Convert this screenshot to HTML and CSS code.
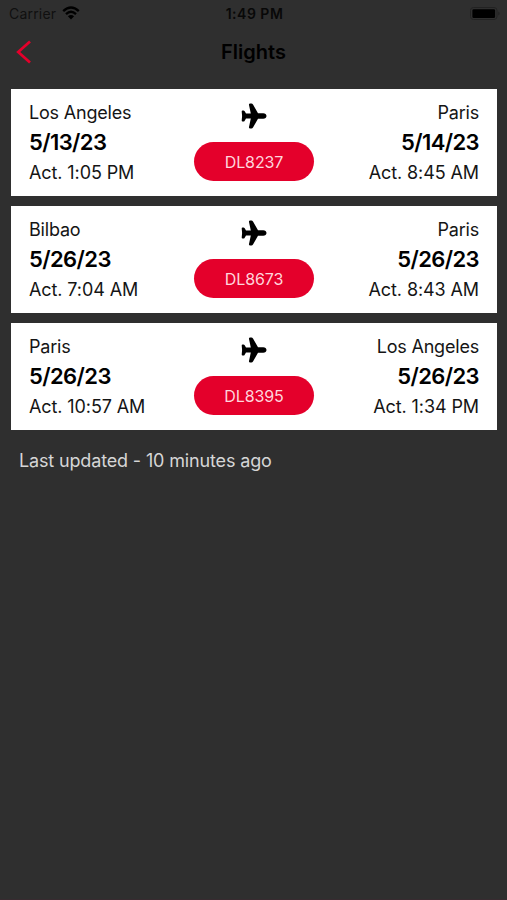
FILE: index.html
```html
<!DOCTYPE html>
<html lang="en">
<head>
<meta charset="UTF-8" />
<meta name="viewport" content="width=device-width, initial-scale=1.0">
<title>Flights</title>
<link rel="stylesheet" href="styles.css">
</head>
<body>

  <svg class="symbols" aria-hidden="true">
    <symbol id="plane" viewBox="0 0 26 26">
      <path d="M8 2Q7.7 .5 9.2 .5H10.4Q11.4 .5 12 1.5L17 10.2H22.2C24.2 10.2 25.5 11.4 25.5 13S24.2 15.8 22.2 15.8H17L12 24.5Q11.4 25.5 10.4 25.5H9.2Q7.7 25.5 8 24L9.8 15.4H5L3.7 17.7Q3.2 18.6 2.4 18.6H1.6Q.7 18.6 .7 17.5L1.1 13L.7 8.5Q.7 7.4 1.6 7.4H2.4Q3.2 7.4 3.7 8.3L5 10.6H9.8Z"/>
    </symbol>
  </svg>

  <div class="status-bar">
    <div class="status-left">
      <span class="carrier">Carrier</span>
      <svg class="wifi" viewBox="0 0 18 14">
        <path class="wave" d="M1.2 5.1Q9 -2 16.8 5.1"/>
        <path class="wave" d="M4 8.1Q9 3.6 14 8.1"/>
        <path d="M5.9 10.2Q9 7.6 12.1 10.2L9 13.4Z"/>
      </svg>
    </div>
    <span class="clock">1:49 PM</span>
    <svg class="battery" viewBox="0 0 30 13">
      <rect class="shell" x=".5" y=".5" width="26.5" height="12" rx="3"/>
      <rect x="2.4" y="2.2" width="22.7" height="8.8" rx="1.3"/>
      <path class="nub" d="M28.3 4.5Q29.6 5.2 29.6 6.5T28.3 8.5Z"/>
    </svg>
  </div>

  <header class="nav-bar">
    <a class="back" href="#" aria-label="Back">
      <svg viewBox="0 0 16 24"><path d="M14 1.5L2.2 12L14 22.5"/></svg>
    </a>
    <h1>Flights</h1>
  </header>

  <ul class="flights">
    <li>
      <div class="leg">
        <span class="city">Los Angeles</span>
        <span class="date">5/13/23</span>
        <span class="time">Act. 1:05 PM</span>
      </div>
      <div class="flight">
        <svg class="plane"><use href="#plane"/></svg>
        <button class="flight-number">DL8237</button>
      </div>
      <div class="leg arrival">
        <span class="city">Paris</span>
        <span class="date">5/14/23</span>
        <span class="time">Act. 8:45 AM</span>
      </div>
    </li>

    <li>
      <div class="leg">
        <span class="city">Bilbao</span>
        <span class="date">5/26/23</span>
        <span class="time">Act. 7:04 AM</span>
      </div>
      <div class="flight">
        <svg class="plane"><use href="#plane"/></svg>
        <button class="flight-number">DL8673</button>
      </div>
      <div class="leg arrival">
        <span class="city">Paris</span>
        <span class="date">5/26/23</span>
        <span class="time">Act. 8:43 AM</span>
      </div>
    </li>

    <li>
      <div class="leg">
        <span class="city">Paris</span>
        <span class="date">5/26/23</span>
        <span class="time">Act. 10:57 AM</span>
      </div>
      <div class="flight">
        <svg class="plane"><use href="#plane"/></svg>
        <button class="flight-number">DL8395</button>
      </div>
      <div class="leg arrival">
        <span class="city">Los Angeles</span>
        <span class="date">5/26/23</span>
        <span class="time">Act. 1:34 PM</span>
      </div>
    </li>
  </ul>

  <p class="updated">Last updated - 10 minutes ago</p>

</body>
</html>
```

FILE: styles.css
```css
* {
  box-sizing: border-box;
}

body {
  margin: 0;
  min-height: 100vh;
  background-color: #2f2f2f;
  border-bottom: 1px solid #382b30;
  color: #000000;
  font-family: Inter, "Liberation Sans", sans-serif;
}

.symbols {
  display: none;
}

/* Status bar */
.status-bar {
  display: grid;
  grid-template-columns: 1fr auto 1fr;
  align-items: center;
  height: 27px;
  padding: 0 7px 0 9px;
}
.status-left {
  display: flex;
  align-items: center;
  gap: 6px;
  color: #101010;
  font-size: 14px;
  letter-spacing: 0.2px;
}
.wifi {
  width: 18px;
  height: 14px;
  margin-top: -2px;
}
.wifi .wave {
  fill: none;
  stroke: #000000;
  stroke-width: 2.4;
}
.clock {
  color: #080808;
  font-size: 14px;
  font-weight: 600;
  letter-spacing: 0.5px;
}
.battery {
  justify-self: end;
  width: 30px;
  height: 13px;
}
.battery .shell {
  fill: none;
  stroke: #222222;
}
.battery .nub {
  fill: #222222;
}

/* Navigation */
.nav-bar {
  display: grid;
  grid-template-columns: 1fr auto 1fr;
  align-items: center;
  height: 50px;
  padding: 0 16px;
}
.back {
  display: flex;
}
.back svg {
  width: 16px;
  height: 24px;
  fill: none;
  stroke: #e4002b;
  stroke-width: 2.7;
}
h1 {
  margin: 0;
  font-size: 20px;
  font-weight: 600;
}

/* Flight cards */
.flights {
  display: flex;
  flex-direction: column;
  gap: 10px;
  margin: 12px 10px 0 11px;
  padding: 0;
  list-style: none;
}
.flights li {
  display: grid;
  grid-template-columns: 1fr 120px 1fr;
  height: 107px;
  padding: 9px 18px 0;
  background-color: #ffffff;
}
.leg {
  display: flex;
  flex-direction: column;
  color: #151515;
  font-size: 18px;
  line-height: 30px;
}
.arrival {
  align-items: flex-end;
}
.city {
  letter-spacing: -0.2px;
}
.date {
  color: #000000;
  font-size: 22px;
  font-weight: 600;
  letter-spacing: -0.6px;
  line-height: 29px;
}
.time {
  margin-top: 1px;
  letter-spacing: -0.1px;
}
.flight {
  display: flex;
  flex-direction: column;
  align-items: center;
  padding-top: 5px;
}
.plane {
  width: 26px;
  height: 26px;
}
.flight-number {
  width: 120px;
  height: 39px;
  margin-top: 13px;
  padding: 0;
  border: none;
  border-radius: 20px;
  background-color: #e4002b;
  color: #ffd5dc;
  font-family: inherit;
  font-size: 16px;
  letter-spacing: -0.1px;
}

.updated {
  margin: 19px 0 0 19px;
  color: #d6d6d6;
  font-size: 18px;
  letter-spacing: -0.15px;
  line-height: 24px;
}
```
